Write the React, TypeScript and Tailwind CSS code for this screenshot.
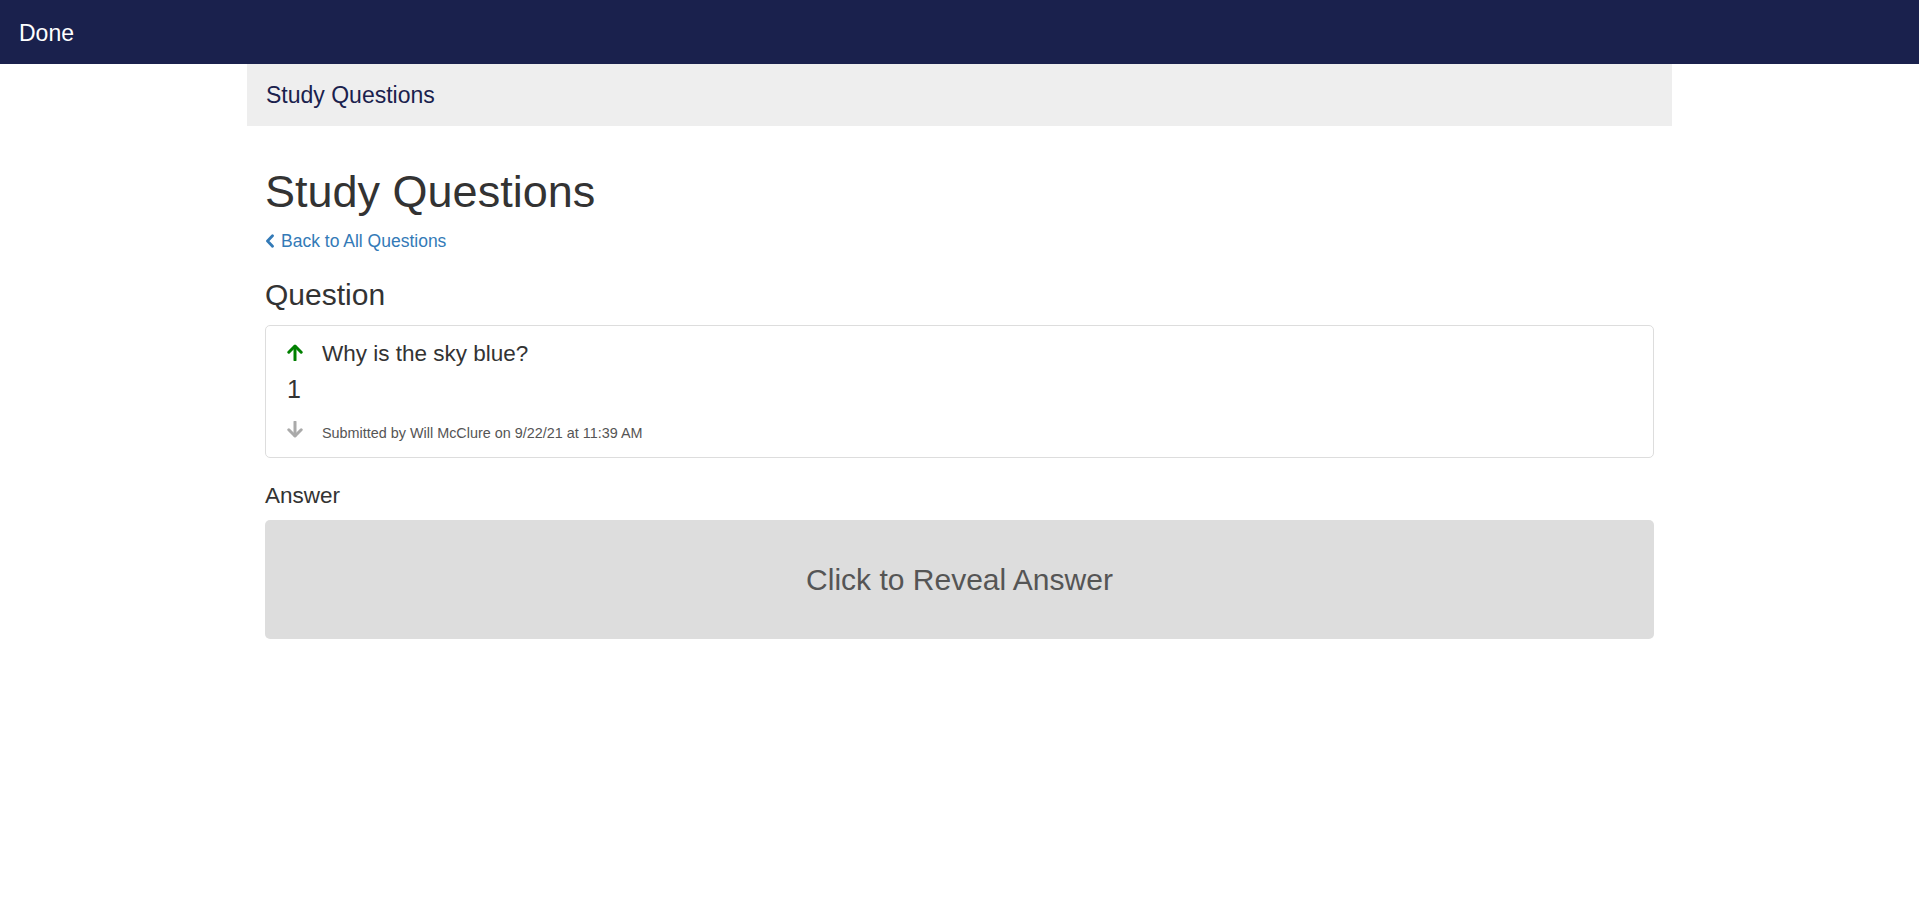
import React from "react";

function ArrowUp({ color }: { color: string }) {
  return (
    <svg width="16" height="17" viewBox="0 0 16 17" className="block">
      <path d="M1.8 8.2 L8 2 L14.2 8.2" fill="none" stroke={color} strokeWidth="3" strokeLinecap="round" strokeLinejoin="round" />
      <path d="M8 2.5 V16" fill="none" stroke={color} strokeWidth="3" strokeLinecap="round" />
    </svg>
  );
}

function ArrowDown({ color }: { color: string }) {
  return (
    <svg width="16" height="17" viewBox="0 0 16 17" className="block">
      <path d="M1.8 8.8 L8 15 L14.2 8.8" fill="none" stroke={color} strokeWidth="3" strokeLinecap="round" strokeLinejoin="round" />
      <path d="M8 1 V14.5" fill="none" stroke={color} strokeWidth="3" strokeLinecap="round" />
    </svg>
  );
}

function App() {
  return (
    <div className="min-h-screen bg-white font-['Liberation_Sans',Arial,sans-serif] text-[#333]">
      <nav className="h-[64px] bg-[#1a214d] flex items-center px-[19px] pt-[2px]">
        <span className="text-[23px] leading-[30px] text-white">Done</span>
      </nav>

      <div className="w-[1425px] mx-auto">
        <div className="h-[62px] bg-[#eeeeee] flex items-center px-[19px]">
          <span className="text-[23px] leading-[27px] text-[#1a214d]">Study Questions</span>
        </div>

        <div className="px-[18px]">
          <h1 className="mt-[41px] text-[45px] leading-[49.5px] text-[#333]">Study Questions</h1>

          <a href="#" className="mt-[12px] flex items-center text-[17.5px] leading-[25px] text-[#337ab7]">
            <svg width="10" height="14" viewBox="0 0 10 14" className="mr-[6px]">
              <path d="M7.5 1.8 L2.5 7 L7.5 12.2" fill="none" stroke="#337ab7" strokeWidth="2.8" strokeLinecap="round" strokeLinejoin="round" />
            </svg>
            Back to All Questions
          </a>

          <h3 className="mt-[24px] text-[30px] leading-[33px] text-[#333]">Question</h3>

          <div className="mt-[14px] h-[133px] border border-[#dddddd] rounded-[5px] flex pl-[21px] pt-[14px]">
            <div className="w-[35px] flex flex-col">
              <div className="mt-[4px]">
                <ArrowUp color="#008000" />
              </div>
              <div className="mt-[14px] text-[25px] leading-[28px] text-[#333]">1</div>
              <div className="mt-[18px]">
                <ArrowDown color="#aaaaaa" />
              </div>
            </div>
            <div className="flex flex-col">
              <div className="text-[22.5px] leading-[27px] text-[#333]">Why is the sky blue?</div>
              <div className="mt-[56px] text-[14.4px] leading-[20px] text-[#555]">
                Submitted by Will McClure on 9/22/21 at 11:39 AM
              </div>
            </div>
          </div>

          <h4 className="mt-[24px] text-[22.5px] leading-[27px] text-[#333]">Answer</h4>

          <button className="mt-[11px] w-full h-[119px] bg-[#dddddd] rounded-[5px] flex items-center justify-center text-[30px] leading-[33px] text-[#555]">
            Click to Reveal Answer
          </button>
        </div>
      </div>
    </div>
  );
}

export default App;
